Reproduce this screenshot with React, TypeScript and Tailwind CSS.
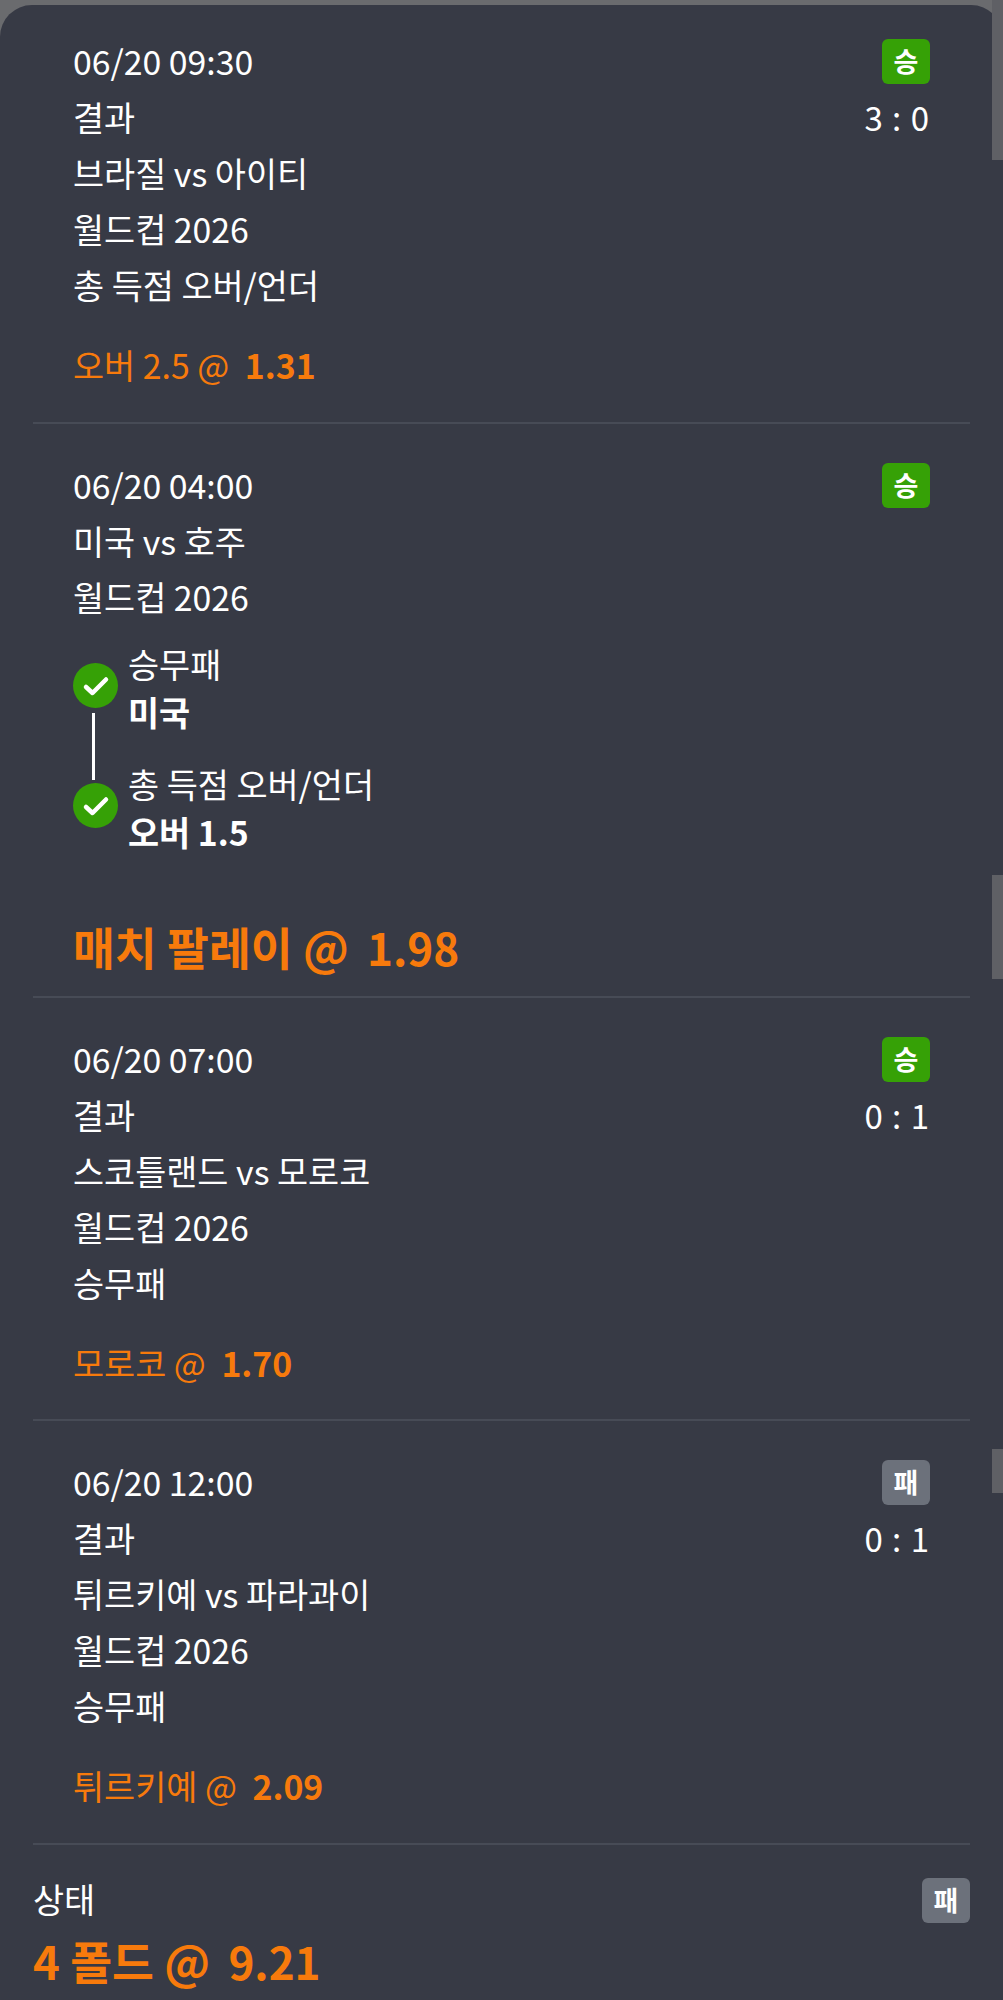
const font = "font-['Noto_Sans_CJK_KR','Noto_Sans',sans-serif]";

type Result = "win" | "lose";

const ResultBadge = ({ result }: { result: Result }) => (
  <div
    className={`flex h-[45px] w-[48px] items-center justify-center rounded-md text-[27px] font-bold text-white ${
      result === "win" ? "bg-[#36a106]" : "bg-[#6c717b]"
    }`}
  >
    {result === "win" ? "승" : "패"}
  </div>
);

const Divider = () => <div className="mx-[33px] h-[2px] bg-[#474b56]" />;

const Row = ({ children }: { children: React.ReactNode }) => (
  <div className="h-[56px] text-[33.8px] leading-[56px] whitespace-nowrap text-white">{children}</div>
);

const Single = ({
  time,
  score,
  result,
  match,
  market,
  pick,
  odds,
  pt,
}: {
  time: string;
  score: string;
  result: Result;
  match: string;
  market: string;
  pick: string;
  odds: string;
  pt: string;
}) => (
  <div className={`px-[73px] ${pt}`}>
    <div className="flex justify-between">
      <div>
        <Row>{time}</Row>
        <Row>결과</Row>
        <Row>{match}</Row>
        <Row>월드컵 2026</Row>
        <Row>{market}</Row>
      </div>
      <div className="flex flex-col items-end pt-[6px]">
        <ResultBadge result={result} />
        <div className="mt-[5px] text-[33px] leading-[56px] tracking-[1px] text-white">{score}</div>
      </div>
    </div>
    <div className="mt-[24px] h-[56px] text-[33.8px] leading-[56px] text-[#f77a0c]">
      {pick} @ <span className="ml-2 font-bold">{odds}</span>
    </div>
  </div>
);

const Leg = ({ market, pick }: { market: string; pick: string }) => (
  <div className="flex items-start gap-[10px]">
    <div className="mt-[23px] flex h-[45px] w-[45px] items-center justify-center rounded-full bg-[#36a106]">
      <svg width="30" height="30" viewBox="0 0 30 30" fill="none">
        <path d="M5 16l6.5 6L25 8.5" stroke="white" strokeWidth="4.5" strokeLinecap="round" strokeLinejoin="round" />
      </svg>
    </div>
    <div>
      <div className="h-[48px] text-[33.8px] leading-[48px] text-white">{market}</div>
      <div className="h-[48px] text-[33.8px] font-bold leading-[48px] text-white">{pick}</div>
    </div>
  </div>
);

export default function App() {
  return (
    <div className={`relative h-[2000px] overflow-hidden bg-[#6a6b6e] pt-[5px] ${font}`}>
      <div className="h-[1995px] rounded-t-[32px] bg-[#373a45]">
        <Single
          pt="pt-[28px]"
          time="06/20 09:30"
          score="3 : 0"
          result="win"
          match="브라질 vs 아이티"
          market="총 득점 오버/언더"
          pick="오버 2.5"
          odds="1.31"
        />
        <div className="h-[29px]" />
        <Divider />

        <div className="flex justify-between px-[73px] pt-[33px]">
          <div>
            <Row>06/20 04:00</Row>
            <Row>미국 vs 호주</Row>
            <Row>월드컵 2026</Row>
          </div>
          <div className="pt-[6px]">
            <ResultBadge result="win" />
          </div>
        </div>
        <div className="relative mt-[15px] flex flex-col gap-[24px] px-[73px]">
          <Leg market="승무패" pick="미국" />
          <Leg market="총 득점 오버/언더" pick="오버 1.5" />
          <div className="absolute left-[92px] top-[73px] h-[67px] w-[3px] bg-white" />
        </div>
        <div className="mt-[58px] h-[64px] px-[73px] text-[45.5px] font-bold leading-[64px] text-[#f77a0c]">
          매치 팔레이 @ <span className="ml-[8px] text-[44px]">1.98</span>
        </div>
        <div className="h-[18px]" />
        <Divider />

        <Single
          pt="pt-[33px]"
          time="06/20 07:00"
          score="0 : 1"
          result="win"
          match="스코틀랜드 vs 모로코"
          market="승무패"
          pick="모로코"
          odds="1.70"
        />
        <div className="h-[28px]" />
        <Divider />

        <Single
          pt="pt-[33px]"
          time="06/20 12:00"
          score="0 : 1"
          result="lose"
          match="튀르키예 vs 파라과이"
          market="승무패"
          pick="튀르키예"
          odds="2.09"
        />
        <div className="h-[29px]" />
        <Divider />

        <div className="flex items-center justify-between px-[33px] pt-[33px]">
          <div className="h-[45px] text-[33.8px] leading-[41px] text-white">상태</div>
          <ResultBadge result="lose" />
        </div>
        <div className="mt-[5px] h-[64px] px-[33px] text-[45.5px] font-bold leading-[64px] text-[#f77a0c]">
          4 폴드 @ <span className="ml-[8px] text-[44px]">9.21</span>
        </div>
      </div>

      {/* scrollbar ghosts */}
      <div className="absolute right-0 top-0 h-[160px] w-[11px] bg-[#5f6065]" />
      <div className="absolute right-0 top-[875px] h-[104px] w-[11px] bg-[#5f6065]" />
      <div className="absolute right-0 top-[1449px] h-[44px] w-[11px] bg-[#5f6065]" />
    </div>
  );
}
